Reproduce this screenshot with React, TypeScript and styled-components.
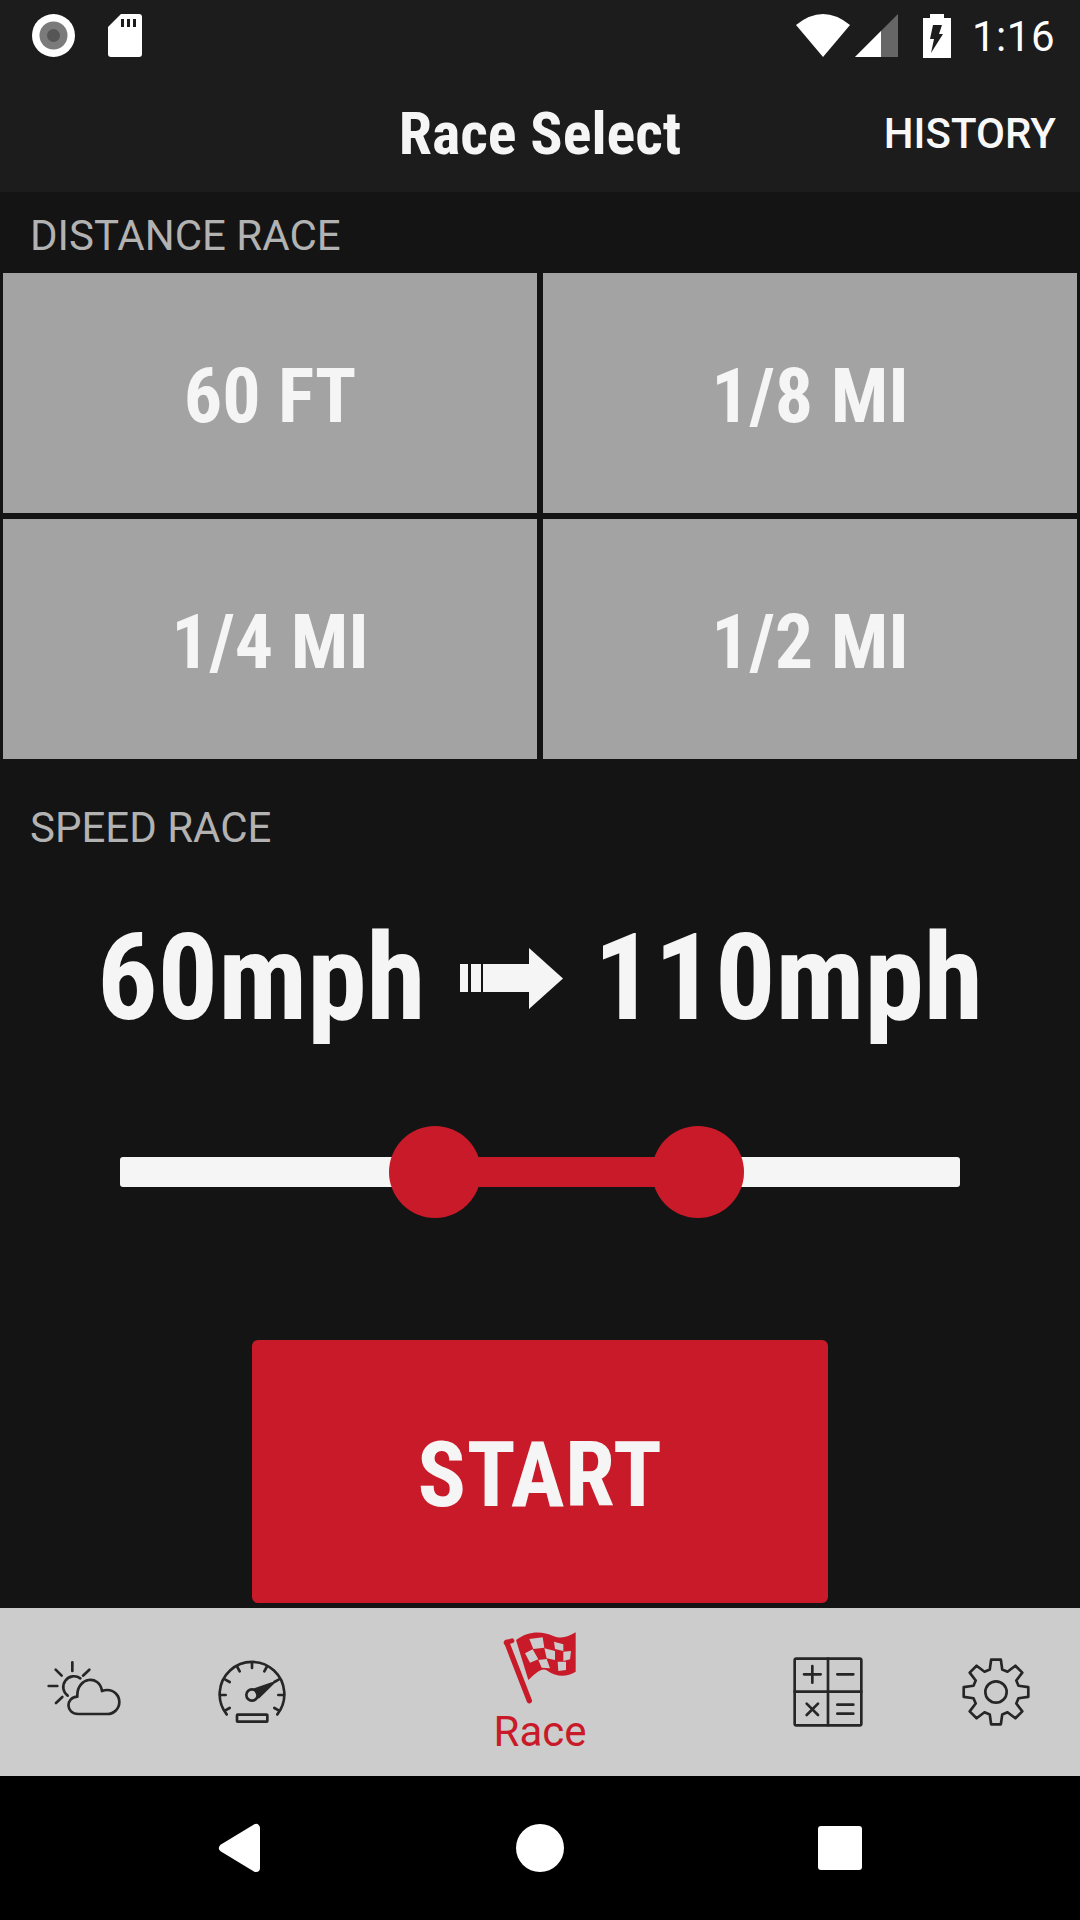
import React from "react";
import styled, { createGlobalStyle } from "styled-components";

const Global = createGlobalStyle`
  html, body { margin: 0; padding: 0; background: #141414; }
  * { box-sizing: border-box; }
`;

const Screen = styled.div`
  width: 1080px;
  height: 1920px;
  display: flex;
  flex-direction: column;
  background: #141414;
  font-family: Roboto, "Liberation Sans", sans-serif;
  overflow: hidden;
`;

const Header = styled.header`
  height: 192px;
  background: #1c1c1c;
  display: flex;
  flex-direction: column;
`;

const StatusBar = styled.div`
  height: 72px;
  padding: 14px 25px 0 32px;
  display: flex;
  align-items: flex-start;
  justify-content: space-between;
`;

const StatusGroup = styled.div`
  display: flex;
  align-items: flex-start;
  gap: ${(p) => p.$gap}px;
`;

const Clock = styled.span`
  font-size: 42px;
  line-height: 42px;
  color: #fff;
  margin: 2px 0 0 16px;
  letter-spacing: 0.5px;
`;

const AppBar = styled.div`
  height: 120px;
  position: relative;
  display: flex;
  align-items: center;
  justify-content: center;
`;

const Title = styled.h1`
  margin: 2px 0 0;
  font-size: 60px;
  font-weight: 700;
  font-stretch: 75%;
  color: #f5f5f5;
`;

const HistoryButton = styled.span`
  position: absolute;
  right: 24px;
  top: 37px;
  font-size: 42px;
  font-weight: 500;
  line-height: 50px;
  color: #f8f8f8;
`;

const SectionLabel = styled.div`
  height: ${(p) => p.$h}px;
  padding: ${(p) => p.$top}px 0 0 30px;
  font-size: 42px;
  line-height: 50px;
  color: #b2b2b2;
`;

const DistanceGrid = styled.div`
  padding: 0 3px;
  display: grid;
  grid-template-columns: 534px 534px;
  grid-auto-rows: 240px;
  gap: 6px;
`;

const DistanceCell = styled.button`
  border: 0;
  padding: 5px 0 0;
  background: #a3a3a3;
  color: #f5f5f5;
  font-family: inherit;
  font-size: 76px;
  font-weight: 700;
  font-stretch: 75%;
`;

const SpeedRow = styled.div`
  margin-top: 64px;
  height: 130px;
  display: flex;
  align-items: center;
  justify-content: center;
  gap: 36px;
  font-size: 120px;
  font-weight: 700;
  font-stretch: 75%;
  color: #f5f5f5;
`;

const ArrowSlot = styled.span`
  display: flex;
  margin: 0 -5px 0 -2px;
`;

const SliderTrack = styled.div`
  position: relative;
  margin: 114px 120px 0;
  height: 30px;
  border-radius: 3px;
  background: #f5f5f5;
`;

const SliderFill = styled.div`
  position: absolute;
  top: 0;
  bottom: 0;
  background: #c91a29;
`;

const SliderThumb = styled.div`
  position: absolute;
  top: -31px;
  width: 92px;
  height: 92px;
  border-radius: 50%;
  background: #c91a29;
`;

const StartRow = styled.div`
  margin-top: 153px;
  display: flex;
  justify-content: center;
`;

const StartButton = styled.button`
  width: 576px;
  height: 263px;
  border: 0;
  padding: 8px 0 0;
  border-radius: 6px;
  background: #c91a29;
  color: #f5f5f5;
  font-family: inherit;
  font-size: 90px;
  font-weight: 700;
  font-stretch: 75%;
  letter-spacing: 0.5px;
`;

const TabBar = styled.nav`
  margin-top: 5px;
  height: 168px;
  background: #cccccc;
  display: grid;
  grid-template-columns: 168px 168px 408px 168px 168px;
`;

const Tab = styled.div`
  display: flex;
  flex-direction: column;
  align-items: center;
  justify-content: ${(p) => (p.$active ? "flex-start" : "center")};
  padding-top: ${(p) => (p.$active ? "20px" : "0")};
`;

const TabLabel = styled.span`
  margin-top: 2px;
  font-size: 42px;
  line-height: 44px;
  color: #c91a29;
`;

const NavBar = styled.div`
  flex: 1;
  background: #000;
  display: flex;
  align-items: center;
  justify-content: center;
  gap: 254px;
`;

const NavCircle = styled.div`
  width: 48px;
  height: 48px;
  border-radius: 50%;
  background: #fff;
`;

const NavSquare = styled.div`
  width: 44px;
  height: 44px;
  border-radius: 3px;
  background: #fff;
`;

const Ink = styled.svg`
  fill: none;
  stroke: #262626;
  stroke-linecap: round;
  stroke-linejoin: round;
  display: block;
`;

const StatusSpacer = styled.span`
  width: 15px;
`;

const gearPath = (() => {
  const cx = 708, cy = 216, R = 98, r = 70;
  const pts: string[] = [];
  for (let i = 0; i < 8; i++) {
    const a = (i * Math.PI) / 4 - Math.PI / 2;
    const p = (rad: number, off: number) => {
      const x = cx + rad * Math.cos(a + off);
      const y = cy + rad * Math.sin(a + off);
      return `${x.toFixed(1)} ${y.toFixed(1)}`;
    };
    pts.push(p(r, -0.27), p(R, -0.15), p(R, 0.15), p(r, 0.27));
  }
  return "M" + pts.join("L") + "Z";
})();

const RecordIcon = () => (
  <svg width="43" height="43" viewBox="0 0 43 43">
    <circle cx="21.5" cy="21.5" r="21.5" fill="#fff" />
    <circle cx="21.5" cy="21.5" r="14" fill="#7b7b7b" />
    <circle cx="21.5" cy="21.5" r="6.5" fill="#565656" />
  </svg>
);

const SdIcon = () => (
  <svg width="34" height="43" viewBox="0 0 34 43">
    <path d="M13 0H31a3 3 0 0 1 3 3V40a3 3 0 0 1-3 3H3a3 3 0 0 1-3-3V13Z" fill="#fff" />
    <path d="M13 5h3v8h-3zM19 5h3v8h-3zM25 5h3v8h-3z" fill="#1c1c1c" />
  </svg>
);

const WifiIcon = () => (
  <svg width="54" height="43" viewBox="0 0 54 43">
    <path d="M0 11Q27 -11 54 11L27 43Z" fill="#fff" />
  </svg>
);

const SignalIcon = () => (
  <svg width="43" height="43" viewBox="0 0 43 43">
    <path d="M0 43L43 0V43Z" fill="#666" />
    <path d="M0 43L26 17V43Z" fill="#fff" />
  </svg>
);

const BatteryIcon = () => (
  <svg width="28" height="44" viewBox="0 0 28 44">
    <path d="M7 0H21V4H28V44H0V4H7Z" fill="#fff" />
    <path d="M10 11H19L16 20H20L8 39L11 25H7Z" fill="#1c1c1c" />
  </svg>
);

const SpeedArrow = () => (
  <svg width="103" height="61" viewBox="0 0 103 61">
    <path d="M0 16H8V44H0ZM11 16H21V44H11ZM23 16H69V0L103 30.5L69 61V44H23Z" fill="#f5f5f5" />
  </svg>
);

const WeatherIcon = () => (
  <Ink width="80" height="80" viewBox="132 156 240 240" strokeWidth="8">
    <path d="M217 187V213M167 209L185 227M268 209L249 227M146 258H172M168 309L187 291" />
    <path d="M241 235A32 32 0 0 0 203 287" />
    <path d="M235 342H322A36 36 0 0 0 322 270Q314 270 306 273C298 222 232 232 232 285V290C196 292 196 342 235 342Z" />
  </Ink>
);

const GaugeIcon = () => (
  <Ink width="80" height="80" viewBox="636 156 240 240" strokeWidth="8">
    <path d="M680 343A97 97 0 1 1 832 343" />
    <path d="M756 190V204M712 201L719 214M676 239L689 246M660 285H677M676 331L689 324M800 201L793 214M836 239L823 246M852 285H835M836 331L823 324" />
    <circle cx="756" cy="285" r="17" />
    <path d="M766 268L818 250L776 291Z" fill="#262626" />
    <rect x="711" y="344" width="91" height="21" rx="2" />
  </Ink>
);

const CalcIcon = () => (
  <Ink width="80" height="80" viewBox="84 96 240 240" strokeWidth="8">
    <rect x="104" y="116" width="200" height="200" rx="5" />
    <path d="M204 116V316M104 215H304" />
    <path d="M157 138V188M132 163H182M232 163H280M140 251L174 285M174 251L140 285M232 254H280M232 281H280" />
  </Ink>
);

const GearIcon = () => (
  <Ink width="80" height="80" viewBox="588 96 240 240" strokeWidth="8">
    <path d={gearPath} />
    <circle cx="708" cy="216" r="32" />
  </Ink>
);

const FlagIcon = () => (
  <svg width="80" height="80" viewBox="120 84 240 240">
    <path d="M140 127L208 302" stroke="#c91a29" strokeWidth="16" strokeLinecap="round" />
    <path d="M138 128L156 122" stroke="#c91a29" strokeWidth="14" strokeLinecap="round" />
    <path
      d="M168 120C205 92 245 92 280 108C305 118 325 110 347 97V215C320 232 290 232 262 212C245 200 225 222 205 240Z"
      fill="#c91a29"
    />
    <path
      d="M208 117L248 112L253 143L220 147ZM282 125L310 133L310 153L285 147ZM195 160L218 148L235 178L210 188ZM253 145L285 153L285 180L260 175ZM310 155L333 153L330 178L310 183ZM235 180L260 177L270 205L245 203ZM293 185L318 185L318 210L295 213Z"
      fill="#cccccc"
    />
  </svg>
);

const BackIcon = () => (
  <svg width="44" height="50" viewBox="0 0 44 50">
    <path d="M38 5V45L5 25Z" fill="#fff" stroke="#fff" strokeWidth="8" strokeLinejoin="round" />
  </svg>
);

export default function App() {
  return (
    <Screen>
      <Global />
      <Header>
        <StatusBar>
          <StatusGroup $gap={33}>
            <RecordIcon />
            <SdIcon />
          </StatusGroup>
          <StatusGroup $gap={5}>
            <WifiIcon />
            <SignalIcon />
            <StatusSpacer />
            <BatteryIcon />
            <Clock>1:16</Clock>
          </StatusGroup>
        </StatusBar>
        <AppBar>
          <Title>Race Select</Title>
          <HistoryButton>HISTORY</HistoryButton>
        </AppBar>
      </Header>
      <SectionLabel $h={81} $top={19}>DISTANCE RACE</SectionLabel>
      <DistanceGrid>
        <DistanceCell>60 FT</DistanceCell>
        <DistanceCell>1/8 MI</DistanceCell>
        <DistanceCell>1/4 MI</DistanceCell>
        <DistanceCell>1/2 MI</DistanceCell>
      </DistanceGrid>
      <SectionLabel $h={90} $top={44}>SPEED RACE</SectionLabel>
      <SpeedRow>
        <span>60mph</span>
        <ArrowSlot><SpeedArrow /></ArrowSlot>
        <span>110mph</span>
      </SpeedRow>
      <SliderTrack>
        <SliderFill style={{ left: 315, width: 263 }} />
        <SliderThumb style={{ left: 269 }} />
        <SliderThumb style={{ left: 532 }} />
      </SliderTrack>
      <StartRow>
        <StartButton>START</StartButton>
      </StartRow>
      <TabBar>
        <Tab><WeatherIcon /></Tab>
        <Tab><GaugeIcon /></Tab>
        <Tab $active>
          <FlagIcon />
          <TabLabel>Race</TabLabel>
        </Tab>
        <Tab><CalcIcon /></Tab>
        <Tab><GearIcon /></Tab>
      </TabBar>
      <NavBar>
        <BackIcon />
        <NavCircle />
        <NavSquare />
      </NavBar>
    </Screen>
  );
}
